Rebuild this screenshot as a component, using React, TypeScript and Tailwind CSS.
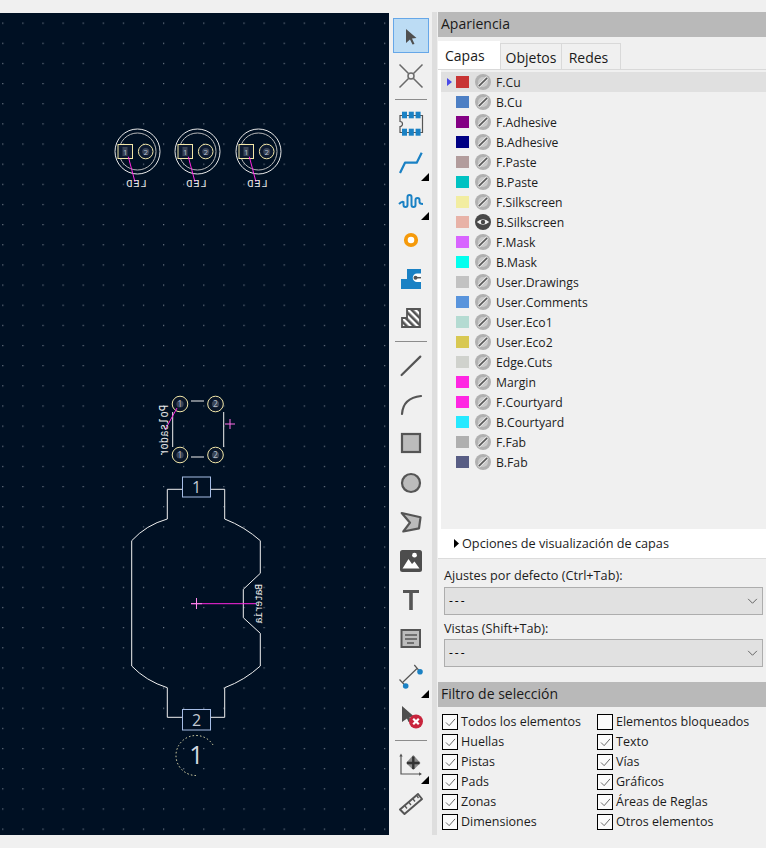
const font = { fontFamily: '"Open Sans", "Noto Sans", sans-serif' }

const layers: [string, string][] = [
  ["F.Cu", "#c83434"],
  ["B.Cu", "#4d7fc4"],
  ["F.Adhesive", "#840084"],
  ["B.Adhesive", "#000084"],
  ["F.Paste", "#b29c9c"],
  ["B.Paste", "#00c2c2"],
  ["F.Silkscreen", "#f2eda1"],
  ["B.Silkscreen", "#e8b2a7"],
  ["F.Mask", "#d864ff"],
  ["B.Mask", "#02ffee"],
  ["User.Drawings", "#c2c2c2"],
  ["User.Comments", "#5994dc"],
  ["User.Eco1", "#b4dbd2"],
  ["User.Eco2", "#d8c852"],
  ["Edge.Cuts", "#d0d2cd"],
  ["Margin", "#ff26e2"],
  ["F.Courtyard", "#ff26e2"],
  ["B.Courtyard", "#26e9ff"],
  ["F.Fab", "#afafaf"],
  ["B.Fab", "#585d84"],
]

const filters: [string, boolean][] = [
  ["Todos los elementos", true],
  ["Elementos bloqueados", false],
  ["Huellas", true],
  ["Texto", true],
  ["Pistas", true],
  ["Vías", true],
  ["Pads", true],
  ["Gráficos", true],
  ["Zonas", true],
  ["Áreas de Reglas", true],
  ["Dimensiones", true],
  ["Otros elementos", true],
]

const D = "#555555"
const B = "#1a81c4"
const G = "#bcbcbc"

const icons: Record<string, React.ReactNode> = {
  cursor: <path d="M7 4 L17.5 13 L13 13.5 L15.5 19 L13.5 19.5 L11 14.5 L7 18 Z" fill="#4f4f4f" />,
  cross: (
    <g stroke="#6a6a6a" strokeWidth="1.5" fill="none">
      <path d="M0.5 0.5 L9.5 9.5 M14.5 14.5 L23.5 23.5 M23.5 0.5 L14.5 9.5 M9.5 14.5 L0.5 23.5" />
      <circle cx="12" cy="12" r="3" />
    </g>
  ),
  footprint: (
    <g>
      <path d="M1 4.5 H23.5 V21.5 H1 V15.5 A2.5 2.5 0 0 0 1 10.5 Z" fill="none" stroke={D} strokeWidth="1.2" />
      {[3, 9.8, 16.6].map((x) => (
        <g key={x} fill={B}>
          <rect x={x} y="0.7" width="5" height="6.6" />
          <rect x={x} y="17.7" width="5" height="7" />
        </g>
      ))}
    </g>
  ),
  route: <path d="M1 23 L6 12.7 H17.7 L22.7 2.7" fill="none" stroke={B} strokeWidth="2.2" strokeLinejoin="round" />,
  tune: (
    <path
      d="M0 15 Q3 12 4.5 13 V16 Q4.5 18 6.5 18 Q8.5 18 8.5 16 V8 Q8.5 6 10.5 6 Q12.5 6 12.5 8 V16 Q12.5 18 14.5 18 Q16.5 18 16.5 16 V11 Q16.5 9 18.5 9 Q20.5 9 20.5 11 V13 Q20.5 15 24 15"
      fill="none"
      stroke={B}
      strokeWidth="2"
    />
  ),
  via: <circle cx="12" cy="12" r="5.2" fill="#fff" stroke="#f59a0b" strokeWidth="3.8" />,
  zone: (
    <g>
      <path d="M8 2 H22 V22 H2 V12 H8 Z" fill={B} />
      <path d="M22 6.5 H18 A4.2 4.2 0 0 0 18 15 H22 Z" fill="#fff" />
      <path d="M16 10.7 H22" stroke={D} strokeWidth="1.5" />
      <circle cx="16.5" cy="10.7" r="2" fill={D} />
    </g>
  ),
  hatch: (
    <g>
      <defs>
        <pattern id="hatchp" width="5" height="5" patternUnits="userSpaceOnUse" patternTransform="rotate(-45)">
          <rect width="5" height="5" fill="#fff" />
          <rect width="2.6" height="5" fill={D} />
        </pattern>
      </defs>
      <path d="M8 3 H21 V21 H3 V12 H8 Z" fill="url(#hatchp)" stroke={D} strokeWidth="1.8" />
    </g>
  ),
  line: <path d="M2.6 22 L21.3 3.6" stroke={D} strokeWidth="2.2" strokeLinecap="round" />,
  arc: <path d="M3 22 Q4 6 22 4" fill="none" stroke={D} strokeWidth="2.2" strokeLinecap="round" />,
  rect: <rect x="3" y="3" width="18" height="18" fill={G} stroke={D} strokeWidth="2.2" />,
  circle: <circle cx="12" cy="12" r="9" fill={G} stroke={D} strokeWidth="2.2" />,
  poly: <path d="M2.7 3 L21.5 7.3 L20 18.3 L4.3 21.5 L11 12.7 Z" fill={G} stroke={D} strokeWidth="2.2" strokeLinejoin="round" />,
  image: (
    <g>
      <rect x="1" y="1" width="22" height="22" rx="2.5" fill="#4d4d4d" />
      <circle cx="15.5" cy="6.2" r="2.4" fill="#fff" />
      <path d="M3.5 19.5 L9.5 10 L13 15 L15.5 12.5 L20.5 19.5 Z" fill="#fff" />
    </g>
  ),
  text: <path d="M4 2 H20 V5 H13.8 V22 H10.2 V5 H4 Z" fill={D} />,
  textbox: (
    <g>
      <rect x="2.5" y="3" width="18.5" height="17" fill={G} stroke={D} strokeWidth="2" />
      <path d="M6 8 H18 M6 12 H18 M8 16 H15" stroke={D} strokeWidth="1.4" />
    </g>
  ),
  dim: (
    <g>
      <path d="M0.5 13.5 L6.7 20 M15.3 -1 L21 5.7 M4 16 L18 2.5" stroke={D} strokeWidth="1.2" fill="none" />
      <circle cx="6.7" cy="20" r="2.8" fill={B} />
      <circle cx="21" cy="5.7" r="2.8" fill={B} />
    </g>
  ),
  del: (
    <g>
      <path d="M3 1 L15 11.5 L10.5 12.5 L12 16 L9.5 17 L8 13.5 L3 17 Z" fill="#4f4f4f" />
      <circle cx="17" cy="16.5" r="7" fill="#c8243c" />
      <path d="M14.2 13.7 L19.8 19.3 M19.8 13.7 L14.2 19.3" stroke="#fff" strokeWidth="2.2" />
    </g>
  ),
  origin: (
    <g>
      <path d="M2 3 V22 H22" fill="none" stroke={D} strokeWidth="1.2" />
      <path d="M0.3 4.5 L2 1.5 L3.7 4.5 Z M20 20.3 L23 22 L20 23.7 Z" fill={D} />
      <path d="M14.3 3 L21.5 11 L14.3 18 L7 11 Z" fill="#8a8a8a" />
      <path d="M8 11 H20.5 M14.3 4.5 V17" stroke="#333" strokeWidth="2.4" />
    </g>
  ),
  ruler: (
    <g fill="none" stroke={D} strokeWidth="2" strokeLinejoin="round">
      <path d="M1 18.5 L19 3 L23 8 L5.5 23 Z" fill="#efefef" />
      <path d="M6 15 L8 17.5 M10 11.5 L12 14 M14 8 L16 10.5 M18 5 L19.5 7" strokeWidth="1.3" />
    </g>
  ),
}

const tools: (string | null)[] = [
  "cursor", "cross", null, "footprint", "route", "tune", "via", "zone", "hatch", null,
  "line", "arc", "rect", "circle", "poly", "image", "text", "textbox", "dim", "del", null, "origin", "ruler",
]
const withMenu = ["route", "tune", "dim", "origin"]

function ToolButton({ name }: { name: string }) {
  return (
    <div className="relative flex h-[39.1px] w-full items-center justify-center">
      {name === "cursor" && (
        <div className="absolute left-[4px] top-[1px] h-[35px] w-[36px] border border-[#66a7e8] bg-[#bcdcf4]" />
      )}
      <svg viewBox="0 0 24 24" className="relative h-[24px] w-[24px] overflow-visible">
        {icons[name]}
      </svg>
      {withMenu.includes(name) && (
        <svg viewBox="0 0 8 8" className="absolute left-[32px] top-[31px] h-[8px] w-[8px]">
          <path d="M8 0 V8 H0 Z" fill="#000" />
        </svg>
      )}
    </div>
  )
}

function LedFootprint({ dx }: { dx: number }) {
  return (
    <g transform={`translate(${dx} 0)`}>
      <circle cx="137.5" cy="151.5" r="22.5" fill="none" stroke="#e8e8e8" />
      <circle cx="137.5" cy="151.5" r="18.5" fill="none" stroke="#b8b8b8" />
      <rect x="118" y="144.5" width="14.5" height="14" fill="#0d1a30" stroke="#f2e7a8" />
      <rect x="122.5" y="147" width="5" height="9" fill="#3a4558" />
      <text x="125.2" y="154.5" fontSize="8" fill="#b4bdcc" textAnchor="middle">1</text>
      <circle cx="145.7" cy="151.5" r="7.3" fill="#0d1a30" stroke="#f2e7a8" />
      <circle cx="145.7" cy="151.5" r="3.5" fill="#3a4558" />
      <text x="145.7" y="154.5" fontSize="8" fill="#b4bdcc" textAnchor="middle">2</text>
      <path d="M128.3 156.7 L135 182" stroke="#ff26e2" />
      <text
        transform="translate(136 187) scale(-1 1)"
        fontSize="10.5"
        letterSpacing="0.9"
        textAnchor="middle"
        fill="#e8e8e8"
        fontFamily="'Liberation Mono', monospace"
      >
        LED
      </text>
    </g>
  )
}

function PcbDrawing() {
  const pads = [
    [180, 404, "1"],
    [215.5, 404, "2"],
    [180, 455, "1"],
    [215.5, 455, "2"],
  ] as const
  return (
    <svg viewBox="0 13 389 822" className="h-[822px] w-[389px]">
      <defs>
        <pattern id="griddots" x="2.2" y="2.4" width="20.1" height="20.15" patternUnits="userSpaceOnUse">
          <rect width="1.2" height="1.2" fill="#6d7886" />
        </pattern>
      </defs>
      <rect x="0" y="13" width="389" height="822" fill="#001023" />
      <rect x="0" y="13" width="389" height="822" fill="url(#griddots)" />

      <LedFootprint dx={0} />
      <LedFootprint dx={60} />
      <LedFootprint dx={121} />

      <g fill="none" stroke="#f0f0f0">
        <path d="M191 401 H204 M191 457 H204 M172.7 412 V447 M223.7 412 V447" />
      </g>
      {pads.map(([x, y, n]) => (
        <g key={`${x}-${y}`}>
          <circle cx={x} cy={y} r="7.8" fill="#0a1629" stroke="#f2e7a8" />
          <circle cx={x} cy={y} r="3.6" fill="#3a4558" />
          <text x={x} y={y + 3} fontSize="8.5" textAnchor="middle" fill="#b4bdcc">{n}</text>
        </g>
      ))}
      <path d="M177 408 L165 430" stroke="#ff26e2" />
      <path d="M225 424 H235 M230 419 V429" stroke="#ff6ee8" />
      <text
        transform="translate(168 430.5) rotate(-90) scale(-1 1.15)"
        fontSize="10.5"
        letterSpacing="0.1"
        textAnchor="middle"
        fill="#e8e8e8"
        fontFamily="'Liberation Mono', monospace"
      >
        Polsador
      </text>

      <path
        d="M182.3 489.3 H167.3 V519 Q146 525 131.7 540.7 V666 Q146 681 167.3 687.7 V717.3 H182.3 M210.7 717.3 H224.7 V687.7 Q245 680 260.3 666 V633.3 L243.3 617.7 V589.3 L260.3 573.3 V540.7 Q245 527 224.7 519 V489.3 H210.7"
        fill="none"
        stroke="#f0f0f0"
      />
      <rect x="182.5" y="477" width="28" height="20" fill="#001023" stroke="#a6bde6" />
      <text x="196.5" y="493" fontSize="16" textAnchor="middle" fill="#c4cad4" fontFamily="'Open Sans', sans-serif">1</text>
      <rect x="182.5" y="709.5" width="28" height="20.5" fill="#001023" stroke="#a6bde6" />
      <text x="196.5" y="725.5" fontSize="16" textAnchor="middle" fill="#c4cad4" fontFamily="'Open Sans', sans-serif">2</text>

      <path d="M191 603.7 H256 M196.5 598 V609" stroke="#ff26e2" />
      <path d="M191 603.7 H202 M196.5 598 V609" stroke="#ff8cec" />
      <text
        transform="translate(262 603.5) rotate(-90) scale(-1 1.15)"
        fontSize="10"
        letterSpacing="-0.4"
        textAnchor="middle"
        fill="#e8e8e8"
        fontFamily="'Liberation Mono', monospace"
      >
        Bateria
      </text>

      <path
        d="M213 745 A20 20 0 1 0 196 775.5"
        fill="none"
        stroke="#e8e2b0"
        strokeDasharray="1.5 2.2"
      />
      <text x="196.5" y="764" fontSize="25" textAnchor="middle" fill="#d3d8e0" fontFamily="'Open Sans', sans-serif">1</text>
    </svg>
  )
}

function EyeButton({ visible }: { visible: boolean }) {
  return (
    <svg viewBox="0 0 16 16" className="h-[16px] w-[16px] shrink-0">
      <circle cx="8" cy="8" r="8" fill={visible ? "#484848" : "#b0b0b0"} />
      {visible ? (
        <g>
          <path d="M1.8 8 Q8 2.6 14.2 8 Q8 13.4 1.8 8 Z" fill="#f2f2f2" />
          <circle cx="8" cy="8" r="2.2" fill="#484848" />
        </g>
      ) : (
        <g>
          <circle cx="8" cy="8" r="5" fill="#c9c9c9" />
          <path d="M3.5 12.5 L12.5 3.5" stroke="#f0f0f0" strokeWidth="3.2" />
          <path d="M3.8 12.2 L12.2 3.8" stroke="#5a5a5a" strokeWidth="1.7" />
        </g>
      )}
    </svg>
  )
}

function PanelTitle({ children }: { children: string }) {
  return <div className="flex h-[25px] items-center bg-[#b9b9b9] pb-[2px] pl-[3px] text-[14px] text-[#1a1a1a]">{children}</div>
}

function Dropdown() {
  return (
    <div className="flex h-[28px] items-center justify-between border border-[#adadad] bg-[#e1e1e1] pl-[4px] pr-[4px]">
      <span className="text-[12px] tracking-[2px] text-black">---</span>
      <svg viewBox="0 0 12 8" className="h-[7px] w-[11px]">
        <path d="M1 1 L6 6 L11 1" fill="none" stroke="#555" />
      </svg>
    </div>
  )
}

export default function App() {
  return (
    <div className="h-[848px] w-[766px] overflow-hidden bg-[#f0f0f0] pt-[12px] text-black" style={font}>
      <div className="flex h-[823px]">
        <div className="w-[389px] pt-px">
          <PcbDrawing />
        </div>

        <div className="flex w-[43px] flex-col pt-[5px]">
          {tools.map((t, i) =>
            t ? (
              <ToolButton key={t} name={t} />
            ) : (
              <div key={i} className="flex h-[8px] items-center justify-center">
                <div className="h-px w-[32px] bg-[#8c8c8c]" />
              </div>
            ),
          )}
        </div>

        <div className="h-full w-[5px] bg-[#dedede]" />

        <div className="flex h-full flex-1 flex-col pl-px">
          <PanelTitle>Apariencia</PanelTitle>

          <div className="flex h-[33px] items-end border-b border-[#d9d9d9] text-[14px] text-[#1a1a1a]">
            <div className="flex h-[28px] w-[62px] items-center bg-white pl-[7px]">Capas</div>
            <div className="flex h-[26px] w-[62px] items-center justify-center border border-b-0 border-[#d9d9d9] pt-[1px]">Objetos</div>
            <div className="flex h-[26px] w-[59px] items-center justify-center border border-b-0 border-l-0 border-[#d9d9d9] pt-[1px] pr-[5px]">Redes</div>
          </div>

          <div className="flex h-[488px] flex-col bg-white">
            <div className="ml-[3px] h-[459px] bg-[#f0f0f0] pt-[2px]">
              {layers.map(([name, color], i) => (
                <div
                  key={name}
                  className={`flex h-[20px] items-center text-[12.2px] text-[#1c1c1c] ${i === 0 ? "bg-[#e0e0e0]" : ""}`}
                >
                  <div className="flex w-[15px] justify-end pr-[4px]">
                    {i === 0 && (
                      <svg viewBox="0 0 5 8" className="h-[8px] w-[5px]">
                        <path d="M0 0 L5 4 L0 8 Z" fill="#4a4ae8" />
                      </svg>
                    )}
                  </div>
                  <div className="h-[12px] w-[13px] shrink-0" style={{ backgroundColor: color }} />
                  <div className="ml-[6px]">
                    <EyeButton visible={name === "B.Silkscreen"} />
                  </div>
                  <span className="ml-[5px] pt-[2px]">{name}</span>
                </div>
              ))}
            </div>
            <div className="flex h-[29px] items-center pl-[16px] text-[12.7px] text-[#1c1c1c]">
              <svg viewBox="0 0 5 9" className="mr-[3px] h-[9px] w-[5px]">
                <path d="M0 0 L5 4.5 L0 9 Z" fill="#000" />
              </svg>
              Opciones de visualización de capas
            </div>
          </div>

          <div className="flex flex-col border-t border-[#dcdcdc] pl-[6px] pr-[3px] text-[12.7px] text-[#1c1c1c]">
            <div className="flex h-[28px] items-end pb-[2px]">Ajustes por defecto (Ctrl+Tab):</div>
            <Dropdown />
            <div className="flex h-[24px] items-end pb-[1px]">Vistas (Shift+Tab):</div>
            <Dropdown />
          </div>

          <div className="mt-[15px]">
            <PanelTitle>Filtro de selección</PanelTitle>
          </div>

          <div className="grid grid-cols-[155px_1fr] pl-[4px] pt-[5px]">
            {filters.map(([label, checked]) => (
              <div key={label} className="flex h-[20px] items-center text-[12.5px] text-[#1c1c1c]">
                <div className="flex h-[16px] w-[16px] shrink-0 items-center justify-center border border-black bg-[#fbfbfb]">
                  {checked && (
                    <svg viewBox="0 0 12 10" className="h-[9px] w-[11px]">
                      <path d="M1 5 L4.5 8.5 L11 1" fill="none" stroke="#5a5a5a" />
                    </svg>
                  )}
                </div>
                <span className="ml-[3px]">{label}</span>
              </div>
            ))}
          </div>
        </div>
      </div>
    </div>
  )
}
